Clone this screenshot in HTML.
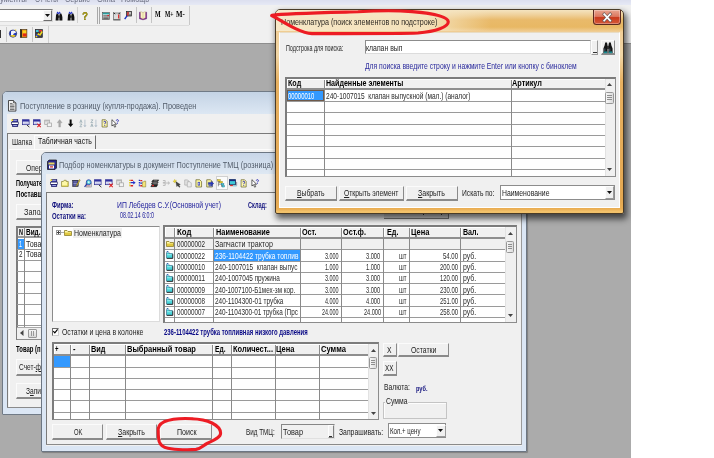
<!DOCTYPE html>
<html>
<head>
<meta charset="utf-8">
<title>1C</title>
<style>
html,body{margin:0;padding:0;background:#fff;}
body{width:714px;height:458px;overflow:hidden;position:relative;font-family:"Liberation Sans",sans-serif;}
#app{position:absolute;left:0;top:0;width:631px;height:458px;background:#ababab;overflow:hidden;}
#fx{position:absolute;left:0;top:0;width:631px;height:458px;filter:blur(.45px);}
.a{position:absolute;box-sizing:border-box;}
.t{position:absolute;white-space:pre;line-height:1;transform-origin:0 0;font-family:"Liberation Sans",sans-serif;}
.btn{background:#f0f0f0;border-top:1px solid #fbfbfb;border-left:1px solid #fbfbfb;border-right:1px solid #8a8a8a;border-bottom:2px solid #8a8a8a;}
.sunk{background:#fff;border:1px solid #8c8c8c;border-right-color:#dcdcdc;border-bottom-color:#dcdcdc;}
.grid{background:#fff;border:1px solid #8c8c8c;border-top:2px solid #7c7c7c;border-left:2px solid #7c7c7c;}
.hl{background:#9a9a9a;height:1px;}
.vl{background:#8a8a8a;width:1px;}
.hd{background:#f0f0f0;border-bottom:2px solid #9a9a9a;}
.win{background:#f0f0f0;border:1px solid #6d7f95;border-radius:4px 4px 0 0;box-shadow:0 0 0 0 #000;}
svg{position:absolute;overflow:visible;}
</style>
</head>
<body>
<div id="app"><div id="fx">
<div class="a" style="left:-3px;top:-3px;width:640px;height:8px;background:linear-gradient(#dcdfef 3px,#e6e9f5 8px);"></div>
<span class="t" style="left:0.0px;top:-6.3px;font-size:9.57px;color:#6a6e80;transform:scaleX(0.815);">ументы</span>
<span class="t" style="left:35.0px;top:-6.3px;font-size:9.57px;color:#6a6e80;transform:scaleX(0.695);">Отчеты</span>
<span class="t" style="left:65.0px;top:-6.3px;font-size:9.57px;color:#6a6e80;transform:scaleX(0.763);">Сервис</span>
<span class="t" style="left:97.0px;top:-6.3px;font-size:9.57px;color:#6a6e80;transform:scaleX(0.809);">Окна</span>
<span class="t" style="left:121.0px;top:-6.3px;font-size:9.57px;color:#6a6e80;transform:scaleX(0.758);">Помощь</span>
<div class="a" style="left:-3px;top:4.6px;width:640px;height:39.6px;background:#f0f0f0;border-bottom:1.500px solid #8e8e8e;"></div>
<div class="a" style="left:-2px;top:9px;width:54.5px;height:12.5px;background:#fff;border:1px solid #7e7e7e;border-bottom-color:#d8d8d8;border-right-color:#d8d8d8;"></div>
<div class="a" style="left:42.7px;top:10px;width:9.3px;height:10.8px;background:#f0f0f0;border:1px solid #fdfdfd;border-right-color:#6e6e6e;border-bottom-color:#6e6e6e;"></div>
<svg style="left:45px;top:14px" width="5" height="3"><path d="M0 0h5l-2.500 3z" fill="#111"/></svg>
<svg style="left:54.6px;top:10.5px" width="7.4" height="10" viewBox="0 0 7.400 10"><path d="M1 4.200l.7-1.600h1.500l.4 1.600v5.300h-3zM4.400 4.200l.4-1.600h1.500l.7 1.600 .4 2v3.300h-3z" fill="#111"/><rect x="3.200" y="4.600" width="1.400" height="2.200" fill="#111"/><path d="M1.400 2.600l1-2.200 1.200 1.300 1.200-1.300 1 2.200-1.200-.2-1 .9-1-.9z" fill="#2434c8"/></svg>
<svg style="left:66.8px;top:10.5px" width="7.4" height="10" viewBox="0 0 7.400 10"><path d="M1 4.200l.7-1.600h1.500l.4 1.600v5.300h-3zM4.400 4.200l.4-1.600h1.500l.7 1.600 .4 2v3.300h-3z" fill="#111"/><rect x="3.200" y="4.600" width="1.400" height="2.200" fill="#111"/><path d="M1.400 2.600l1-2.200 1.200 1.300 1.200-1.300 1 2.200-1.200-.2-1 .9-1-.9z" fill="#2434c8"/></svg>
<span class="t" style="left:82.4px;top:10.1px;font-size:11.74px;font-weight:bold;color:#a89c14;transform:scaleX(0.837);text-shadow:0 0 .6px #433c00;">?</span>
<div class="a" style="left:77px;top:7px;width:1px;height:16px;background:#d0d0d0;"></div>
<div class="a" style="left:96.5px;top:6.5px;width:1px;height:17.5px;background:#a8a8a8;"></div>
<div class="a" style="left:98.5px;top:6.5px;width:1px;height:17.5px;background:#a8a8a8;"></div>
<svg style="left:101.8px;top:11.8px" width="8" height="8" viewBox="0 0 8 8"><rect x=".4" y=".4" width="7.200" height="7.200" fill="#f4f4f4" stroke="#555" stroke-width=".7"/><rect x=".8" y=".8" width="6.400" height="1.600" fill="#28a0a0"/><path d="M1.200 3.800h5.600M1.200 5.200h5.600M1.200 6.600h5.600" stroke="#333" stroke-width=".8"/><rect x="5.400" y="2.900" width="1.600" height="1.300" fill="#d22"/></svg>
<svg style="left:113px;top:11.5px" width="8" height="8.5" viewBox="0 0 8 8.500"><rect x=".6" y="1" width="6.400" height="6.600" fill="#dcdcdc" stroke="#666" stroke-width=".7"/><path d="M.6 .6l1.500 1.600M7 .6l-1.500 1.600" stroke="#222" stroke-width="1"/><rect x="5" y="2.500" width="1.200" height="4" fill="#e03030"/><path d="M.3 8h7.200" stroke="#444" stroke-width=".8"/></svg>
<svg style="left:124.2px;top:11.2px" width="8" height="9" viewBox="0 0 8 9"><rect x="2.500" y=".5" width="5" height="4.500" fill="#888" stroke="#222" stroke-width=".7"/><rect x="3.200" y="1.200" width="1.600" height="1.600" fill="#d22"/><rect x="5.200" y="1.200" width="1.600" height="1.600" fill="#ddd"/><path d="M3.500 4.200l-2.800 4" stroke="#1830c0" stroke-width="1.400"/><path d="M4.200 3.200l-1 1.500" stroke="#d22" stroke-width="1.200"/></svg>
<div class="a" style="left:135.5px;top:7px;width:1px;height:16px;background:#c4c4c4;"></div>
<svg style="left:139.2px;top:11px" width="8.2" height="9.2" viewBox="0 0 8.200 9.200"><path d="M.5 1.200l3.500 1 3.600-1v6.600l-3.600 1-3.500-1z" fill="#8a2a9c" stroke="#4a0a5c" stroke-width=".5"/><path d="M1.600 .4l2.400 1.200 2.400-1.200v6.400l-2.400 1.200-2.400-1.200z" fill="#fbf6c8" stroke="#a08a50" stroke-width=".3"/><path d="M4 1.600v6.400" stroke="#b8a860" stroke-width=".5"/></svg>
<div class="a" style="left:150.5px;top:7px;width:1px;height:16px;background:#c4c4c4;"></div>
<span class="t" style="left:155.3px;top:11.3px;font-size:8.27px;font-weight:bold;color:#000;transform:scaleX(0.726);font-family:'Liberation Serif',serif;">M</span>
<span class="t" style="left:164.8px;top:11.3px;font-size:8.27px;font-weight:bold;color:#000;transform:scaleX(0.683);font-family:'Liberation Serif',serif;">M+</span>
<span class="t" style="left:176.0px;top:11.3px;font-size:8.27px;font-weight:bold;color:#000;transform:scaleX(0.830);font-family:'Liberation Serif',serif;">M-</span>
<div class="a" style="left:188.5px;top:6px;width:1px;height:18.5px;background:#c8c8c8;"></div>
<div class="a" style="left:0px;top:24.5px;width:189px;height:1px;background:#dedede;"></div>
<div class="a" style="left:0px;top:29.5px;width:1.2px;height:8.5px;background:#333;"></div>
<div class="a" style="left:5.5px;top:27px;width:1px;height:15px;background:#c8c8c8;"></div>
<svg style="left:8.6px;top:29.3px" width="8" height="9.2" viewBox="0 0 8 9.200"><circle cx="4" cy="4.600" r="3.700" fill="#1c34b8" stroke="#0c1450" stroke-width=".5"/><path d="M2 2.200c2-1.600 4.600-.6 5.200 1.200l-2.400 1.200-1.400 2.400-1.400-.6z" fill="#f4f4fc"/><path d="M1 6.500c1.500 1.800 4.200 2 5.800 .2l-1.800-1z" fill="#e8c820"/><path d="M5.600 .6l1.800 .2-.6 1.600z" fill="#e8c820"/></svg>
<svg style="left:20.2px;top:29.3px" width="7.2" height="9" viewBox="0 0 7.200 9"><rect x=".3" y=".5" width="6.600" height="8" fill="#e88c10" stroke="#3a2a10" stroke-width=".6"/><rect x=".3" y=".5" width="1.600" height="8" fill="#222"/><rect x="2.600" y="1.500" width="3.600" height="3" fill="#f8d020"/><rect x="3" y="4.500" width="3.400" height="2.800" fill="#e02818"/></svg>
<div class="a" style="left:32px;top:27px;width:1px;height:15px;background:#c8c8c8;"></div>
<svg style="left:35px;top:29.3px" width="7.8" height="9" viewBox="0 0 7.800 9"><rect x=".3" y=".4" width="7.200" height="8.200" fill="#3a3a44" stroke="#111" stroke-width=".5"/><rect x="1" y="1" width="2.600" height="2" fill="#40c8d8"/><rect x="4" y="1" width="3" height="1.600" fill="#e03030"/><path d="M1 8l2.500-3 1.500 1 2.200-3.500" fill="none" stroke="#f0d820" stroke-width="1.500"/><path d="M1.200 5.500l2 1.800" stroke="#2840d0" stroke-width="1.300"/></svg>
<div class="a" style="left:47.8px;top:26px;width:1px;height:17px;background:#d0d0d0;"></div>
<div class="a" style="left:2px;top:90.6px;width:505px;height:324px;background:#dbe6f4;border:1px solid #707a86;border-radius:5px 5px 1px 1px;"></div>
<div class="a" style="left:3px;top:92px;width:503px;height:21.7px;background:linear-gradient(#c4d3e5,#dce7f3);border-radius:4px 4px 0 0;"></div>
<div class="a" style="left:7px;top:113.5px;width:495px;height:294.5px;background:#f0f0f0;"></div>
<svg style="left:8.200px;top:99.600px" width="8.400" height="11.600" viewBox="0 0 8.400 11.600"><path d="M.5 .5h5l2.400 2.400v8.200h-7.400z" fill="#f2f2f2" stroke="#3a3a3a" stroke-width=".9"/><path d="M5.500 .5v2.400h2.400" fill="#bbb" stroke="#3a3a3a" stroke-width=".7"/><path d="M2 3.500h2.500M2 5h4.500M2 6.500h4.500M2 8h4.500M2 9.500h4.500" stroke="#555" stroke-width=".8"/></svg>
<span class="t" style="left:19.6px;top:101.9px;font-size:9.31px;color:#525c6a;transform:scaleX(0.792);">Поступление в розницу (купля-продажа). Проведен</span>
<svg style="left:11px;top:119.3px" width="8.2" height="8.6" viewBox="0 0 9 9"><rect x="1.500" y=".5" width="6" height="3" fill="#2a2a98" stroke="#15155a" stroke-width=".6"/><rect x=".5" y="3.200" width="7.500" height="2.600" fill="#fff" stroke="#15155a" stroke-width=".7"/><rect x="1.500" y="5.800" width="6" height="2.400" fill="#2a2a98" stroke="#15155a" stroke-width=".6"/><rect x="2.500" y="1.300" width="4" height=".8" fill="#cfd4ff"/><rect x="2.500" y="6.600" width="4" height=".8" fill="#cfd4ff"/><rect x=".3" y=".2" width="2" height="1.800" fill="#f2e23a"/></svg>
<svg style="left:21.7px;top:119.3px" width="8.2" height="8.6" viewBox="0 0 9 9"><rect x=".6" y=".6" width="7.200" height="5.400" fill="#eceefa" stroke="#2a2a90" stroke-width=".8"/><rect x=".6" y=".6" width="7.200" height="2" fill="#3030a0"/><path d="M1.500 4.300h5.400" stroke="#8a8ad0" stroke-width=".7"/><path d="M5.500 6.500l2.600 2.200" stroke="#222" stroke-width="1"/></svg>
<svg style="left:32.7px;top:119.3px" width="8.2" height="8.6" viewBox="0 0 9 9"><rect x=".6" y=".6" width="7.200" height="5.400" fill="#eceefa" stroke="#2a2a90" stroke-width=".8"/><rect x=".6" y=".6" width="7.200" height="2" fill="#3030a0"/><path d="M1.500 4.300h3.400" stroke="#8a8ad0" stroke-width=".7"/><path d="M4.800 4.800l3.700 4M8.500 4.800l-3.700 4" stroke="#e02020" stroke-width="1.100"/></svg>
<svg style="left:44px;top:119.3px" width="8.2" height="8.6" viewBox="0 0 9 9"><rect x=".8" y="1" width="5.400" height="4.800" fill="#e6e6e6" stroke="#a2a2a2" stroke-width=".8"/><rect x=".8" y="1" width="5.400" height="1.400" fill="#b8b8b8"/><rect x="3.600" y="4.200" width="4.600" height="4" fill="#f2f2f2" stroke="#a2a2a2" stroke-width=".8"/></svg>
<svg style="left:55.5px;top:119.3px" width="8.2" height="8.6" viewBox="0 0 9 9"><path d="M4 .3l2.800 3.700h-1.800v4.700h-2v-4.700h-1.800z" fill="#a8a8a8" stroke="#929292" stroke-width=".3"/></svg>
<svg style="left:67px;top:119.3px" width="8.2" height="8.6" viewBox="0 0 9 9"><path d="M4 8.700l3-3.700h-1.900v-4.700h-2.200v4.700h-1.900z" fill="#0a0a0a"/></svg>
<svg style="left:79px;top:119.3px" width="8.2" height="8.6" viewBox="0 0 9 9"><path d="M6.500 .5v7.500M5.300 6.500l1.200 1.800 1.200-1.800" fill="none" stroke="#9ab" stroke-width=".7"/><path d="M.8 4l1.300-3.400 1.300 3.400M1.300 2.900h1.600" fill="none" stroke="#8aa0a8" stroke-width=".7"/><path d="M.9 5.300h2.400l-2.400 3h2.500" fill="none" stroke="#8aa0a8" stroke-width=".7"/></svg>
<svg style="left:89.8px;top:119.3px" width="8.2" height="8.6" viewBox="0 0 9 9"><path d="M6.500 .5v7.500M5.300 6.500l1.200 1.800 1.200-1.800" fill="none" stroke="#9ab" stroke-width=".7"/><path d="M.8 8.500l1.300-3.400 1.300 3.400M1.300 7.400h1.600" fill="none" stroke="#8aa0a8" stroke-width=".7"/><path d="M.9 .7h2.400l-2.400 3h2.500" fill="none" stroke="#8aa0a8" stroke-width=".7"/></svg>
<svg style="left:100.5px;top:119.3px" width="8.2" height="8.6" viewBox="0 0 9 9"><path d="M1.200 .6h3.800l1.800 1.800v6.200h-5.600z" fill="#fdf8b0" stroke="#5c5618" stroke-width=".7"/><path d="M3 3.300c0-1.400 2.200-1.400 2.200 0 0 .9-1.100 .9-1.100 2.100M4.100 6.300v1" fill="none" stroke="#2828b0" stroke-width="1"/></svg>
<svg style="left:111px;top:119.3px" width="8.2" height="8.6" viewBox="0 0 9 9"><path d="M1 .5v7l1.700-1.500 1.300 2.800 1.200-.6-1.300-2.700h2.200z" fill="#fff" stroke="#111" stroke-width=".7"/><path d="M5.800 1.600c0-1.500 2.400-1.500 2.400 0 0 .9-1.200 .9-1.200 2M7 4.400v.9" fill="none" stroke="#2828b0" stroke-width="1"/></svg>
<div class="a" style="left:7px;top:133px;width:495px;height:1px;background:#7a7a7a;"></div>
<div class="a" style="left:7px;top:133px;width:1px;height:274.5px;background:#7a7a7a;"></div>
<div class="a" style="left:7px;top:407px;width:495px;height:1px;background:#8a8a8a;"></div>
<div class="a" style="left:9px;top:148.5px;width:493px;height:1px;background:#fcfcfc;"></div>
<div class="a" style="left:9px;top:148.5px;width:1px;height:258px;background:#fcfcfc;"></div>
<span class="t" style="left:11.9px;top:138.4px;font-size:8.7px;color:#222;transform:scaleX(0.766);">Шапка</span>
<div class="a" style="left:34px;top:135px;width:62px;height:14px;background:#f0f0f0;border-top:1px solid #fcfcfc;border-left:1px solid #fcfcfc;border-right:1px solid #6e6e6e;"></div>
<span class="t" style="left:38.2px;top:136.9px;font-size:8.7px;color:#111;transform:scaleX(0.796);">Табличная часть</span>
<div class="a btn" style="left:16px;top:160.3px;width:44px;height:15px;"></div>
<span class="t" style="left:25.7px;top:163.5px;font-size:8.7px;color:#222;transform:scaleX(0.779);">Операция</span>
<span class="t" style="left:15.5px;top:180.4px;font-size:8.27px;font-weight:bold;color:#000;transform:scaleX(0.675);">Получатель</span>
<span class="t" style="left:15.5px;top:190.5px;font-size:8.27px;font-weight:bold;color:#000;transform:scaleX(0.738);">Поставщик</span>
<div class="a btn" style="left:16px;top:204px;width:44px;height:15.5px;"></div>
<span class="t" style="left:24.4px;top:207.5px;font-size:8.7px;color:#222;transform:scaleX(0.843);">Заполнить</span>
<div class="a grid" style="left:16px;top:226px;width:40px;height:114px;"></div>
<div class="a hd" style="left:18px;top:228px;width:38px;height:10px;"></div>
<span class="t" style="left:18.5px;top:228.4px;font-size:8.7px;font-weight:bold;color:#000;transform:scaleX(0.637);">N</span>
<span class="t" style="left:26.0px;top:228.4px;font-size:8.7px;font-weight:bold;color:#000;transform:scaleX(0.741);">Вид.</span>
<div class="a" style="left:18px;top:238.5px;width:6px;height:10.5px;background:#3399ff;"></div>
<span class="t" style="left:18.5px;top:239.6px;font-size:8.7px;color:#fff;transform:scaleX(0.620);">1</span>
<span class="t" style="left:18.5px;top:250.4px;font-size:8.7px;color:#222;transform:scaleX(0.723);">2</span>
<span class="t" style="left:26.0px;top:239.6px;font-size:8.7px;color:#222;transform:scaleX(0.823);">Това</span>
<span class="t" style="left:26.0px;top:250.4px;font-size:8.7px;color:#222;transform:scaleX(0.823);">Това</span>
<div class="a hl" style="left:17px;top:249px;width:38px;height:1px;"></div>
<div class="a hl" style="left:17px;top:259.9px;width:38px;height:1px;"></div>
<div class="a hl" style="left:17px;top:270.8px;width:38px;height:1px;"></div>
<div class="a hl" style="left:17px;top:281.7px;width:38px;height:1px;"></div>
<div class="a hl" style="left:17px;top:292.6px;width:38px;height:1px;"></div>
<div class="a hl" style="left:17px;top:303.5px;width:38px;height:1px;"></div>
<div class="a hl" style="left:17px;top:314.4px;width:38px;height:1px;"></div>
<div class="a hl" style="left:17px;top:325.3px;width:38px;height:1px;"></div>
<div class="a vl" style="left:24px;top:227px;width:1px;height:101px;"></div>
<div class="a" style="left:17px;top:327px;width:38px;height:12px;background:#f0f0f0;border-top:1px solid #aaa;"></div>
<svg style="left:20px;top:330px" width="4" height="6"><path d="M3.500 0v6l-3.500-3z" fill="#444"/></svg>
<div class="a" style="left:27.5px;top:328.5px;width:9px;height:9.5px;background:linear-gradient(#f4f4f4,#d8d8d8);border:1px solid #989898;border-radius:1px;"></div>
<div class="a" style="left:30.5px;top:331px;width:1px;height:5px;background:#999;"></div>
<div class="a" style="left:32.5px;top:331px;width:1px;height:5px;background:#999;"></div>
<span class="t" style="left:16.0px;top:345.9px;font-size:8.27px;font-weight:bold;color:#000;transform:scaleX(0.721);">Товар (приход</span>
<div class="a btn" style="left:16px;top:359px;width:44px;height:16.5px;"></div>
<span class="t" style="left:18.5px;top:363.0px;font-size:8.7px;color:#222;transform:scaleX(0.751);">Счет-<u>ф</u></span>
<div class="a btn" style="left:16px;top:383px;width:44px;height:15.5px;"></div>
<span class="t" style="left:26.0px;top:386.5px;font-size:8.7px;color:#222;transform:scaleX(0.763);">З<u>а</u>пи</span>
<div class="a" style="left:41px;top:151.5px;width:485.5px;height:300px;background:#dbe6f4;border:1px solid #6c7683;border-radius:5px 5px 1px 1px;box-shadow:1px 1px 1px rgba(0,0,0,.25);"></div>
<div class="a" style="left:42px;top:152.5px;width:483.5px;height:21.5px;background:linear-gradient(#c8d6e8,#dee8f3);border-radius:4px 4px 0 0;"></div>
<div class="a" style="left:46px;top:173.5px;width:476px;height:272px;background:#f0f0f0;"></div>
<div class="a" style="left:46px;top:192px;width:476px;height:1px;background:#7a7a7a;"></div>
<div class="a" style="left:46px;top:192px;width:1px;height:253px;background:#7a7a7a;"></div>
<div class="a" style="left:46px;top:444.3px;width:476px;height:1px;background:#8a8a8a;"></div>
<div class="a" style="left:521px;top:192px;width:1px;height:253px;background:#9a9a9a;"></div>
<svg style="left:46.5px;top:159px" width="10" height="11" viewBox="0 0 10 11"><path d="M2 1h7.500v8l-1.500 1.500h-7.500v-8z" fill="#28288a" stroke="#111" stroke-width=".7"/><rect x="1.500" y="3.500" width="6" height="2" fill="#e8d860"/><rect x="2" y="6.500" width="5" height="3" fill="#fff"/><rect x="3" y="7.300" width="3" height="1.200" fill="#c22"/></svg>
<span class="t" style="left:58.5px;top:160.9px;font-size:9.31px;color:#525c6a;transform:scaleX(0.781);">Подбор номенклатуры в документ Поступление ТМЦ (розница)</span>
<div class="a" style="left:216px;top:176px;width:11.5px;height:13.5px;background:#fbfbfb;border:1px solid #d0d0d0;"></div>
<svg style="left:49.5px;top:178.5px" width="8.2" height="8.6" viewBox="0 0 9 9"><rect x="1.500" y=".5" width="6" height="3" fill="#2a2a98" stroke="#15155a" stroke-width=".6"/><rect x=".5" y="3.200" width="7.500" height="2.600" fill="#fff" stroke="#15155a" stroke-width=".7"/><rect x="1.500" y="5.800" width="6" height="2.400" fill="#2a2a98" stroke="#15155a" stroke-width=".6"/><rect x="2.500" y="1.300" width="4" height=".8" fill="#cfd4ff"/><rect x="2.500" y="6.600" width="4" height=".8" fill="#cfd4ff"/><rect x=".3" y=".2" width="2" height="1.800" fill="#f2e23a"/></svg>
<svg style="left:61px;top:178.5px" width="8.2" height="8.6" viewBox="0 0 9 9"><path d="M.6 2.500h2l.8-1.300h2.300v1.300h2.300v5.500h-7.400z" fill="#fdf8a8" stroke="#7c7420" stroke-width=".7"/><path d="M1.200 7.400h6.200v-3.800" fill="none" stroke="#d8c840" stroke-width=".9"/></svg>
<svg style="left:72px;top:178.5px" width="8.2" height="8.6" viewBox="0 0 9 9"><rect x=".8" y="1.200" width="6" height="6.800" fill="#2a2a78" stroke="#111" stroke-width=".5"/><path d="M1.500 3h4.500M1.500 4.700h4.500M1.500 6.400h4.500" stroke="#c8ccf0" stroke-width=".7"/><path d="M8.200 .3l-3.300 6 -.3 1.600 1.300-1 3.200-6z" fill="#e8d23a" stroke="#5a4a10" stroke-width=".4"/></svg>
<svg style="left:83.8px;top:178.5px" width="8.2" height="8.6" viewBox="0 0 9 9"><rect x="2.200" y="5" width="5.800" height="3.600" fill="#d8d8e4" stroke="#666" stroke-width=".5"/><circle cx="5.200" cy="3.300" r="2.700" fill="#58d0d8" stroke="#2838a8" stroke-width=".9"/><circle cx="5.200" cy="3.300" r="1" fill="#d8f8f8"/><path d="M3.200 5.300l-2.600 3.200" stroke="#2838a8" stroke-width="1.300"/><path d="M3 7.300h4" stroke="#c04040" stroke-width=".6"/></svg>
<svg style="left:94.2px;top:178.5px" width="8.2" height="8.6" viewBox="0 0 9 9"><rect x=".6" y=".6" width="7.200" height="5.400" fill="#eceefa" stroke="#2a2a90" stroke-width=".8"/><rect x=".6" y=".6" width="7.200" height="2" fill="#3030a0"/><path d="M1.500 4.300h5.400" stroke="#8a8ad0" stroke-width=".7"/><path d="M5.500 6.500l2.600 2.200" stroke="#222" stroke-width="1"/></svg>
<svg style="left:105px;top:178.5px" width="8.2" height="8.6" viewBox="0 0 9 9"><rect x=".6" y=".6" width="7.200" height="5.400" fill="#eceefa" stroke="#2a2a90" stroke-width=".8"/><rect x=".6" y=".6" width="7.200" height="2" fill="#3030a0"/><path d="M1.500 4.300h3.400" stroke="#8a8ad0" stroke-width=".7"/><path d="M4.800 4.800l3.700 4M8.500 4.800l-3.700 4" stroke="#e02020" stroke-width="1.100"/></svg>
<svg style="left:116.3px;top:178.5px" width="8.2" height="8.6" viewBox="0 0 9 9"><rect x=".8" y=".8" width="5.400" height="4.800" fill="#e6e6e6" stroke="#a2a2a2" stroke-width=".8"/><rect x=".8" y=".8" width="5.400" height="1.400" fill="#b8b8b8"/><rect x="3.600" y="4" width="4.600" height="4.200" fill="#f2f2f2" stroke="#a2a2a2" stroke-width=".8"/></svg>
<svg style="left:127.7px;top:178.5px" width="8.2" height="8.6" viewBox="0 0 9 9"><path d="M2 .5v8" stroke="#e0c820" stroke-width="1.600" stroke-dasharray="1.600 1"/><path d="M2.800 3.200h3v-1.400l2.600 2-2.600 2v-1.400h-3z" fill="#2030c8"/><path d="M2.800 6.400h2.800v1.600h-2.800z" fill="#d82020"/><path d="M2.800 .6h2.800v1.400h-2.800z" fill="#d82020"/></svg>
<svg style="left:138.3px;top:178.5px" width="8.2" height="8.6" viewBox="0 0 9 9"><path d="M1.600 .5v8" stroke="#2030c8" stroke-width="1.500" stroke-dasharray="1.600 1"/><path d="M2.500 .8h2.200v1.500h-2.200zM2.500 6.500h2.200v1.500h-2.200z" fill="#d82020"/><path d="M2.500 3.600h2.200v1.400h-2.200z" fill="#2030c8"/><path d="M4.800 3h1.400l.6-.9h1.700v6.400h-3.700z" fill="#f4e478" stroke="#6c6420" stroke-width=".5"/></svg>
<svg style="left:150.5px;top:178.5px" width="8.2" height="8.6" viewBox="0 0 9 9"><path d="M2.200 .8h6.300l-1.400 2h-6.300z" fill="#333" stroke="#000" stroke-width=".5"/><path d="M1.700 3.300h6.300l-1.400 2h-6.300z" fill="#555" stroke="#000" stroke-width=".5"/><path d="M1.200 5.800h6.300l-1.400 2.400h-6.300z" fill="#222" stroke="#000" stroke-width=".5"/><rect x="1.200" y="6.300" width="2" height="1.400" fill="#e02020"/><path d="M3 1.800h4M2.500 4.300h4" stroke="#ddd" stroke-width=".5"/></svg>
<svg style="left:161.5px;top:178.5px" width="8.2" height="8.6" viewBox="0 0 9 9"><path d="M1 1.500h2.500v2.500h-2.500M1 4h2.500v2.800h-2.500M4.500 4.200h3.500M6.500 2.600l1.800 1.600-1.800 1.600" fill="none" stroke="#b4b4b4" stroke-width="1"/></svg>
<svg style="left:173px;top:178.5px" width="8.2" height="8.6" viewBox="0 0 9 9"><path d="M1.800 0l.6 1.400 1.500-.3-1 1.100 .9 1.300-1.500-.4-.9 1.200-.1-1.500-1.400-.6 1.400-.5z" fill="#f4e030" stroke="#b09810" stroke-width=".3"/><path d="M3.200 2.800l4.800 3-1.700.5 1.400 2-.9.600-1.400-2-1.200 1.200z" fill="#444" stroke="#111" stroke-width=".4"/></svg>
<svg style="left:184px;top:178.5px" width="8.2" height="8.6" viewBox="0 0 9 9"><path d="M.8 .8h3.200l1.200 1.200v4.500h-4.400z" fill="#e4e4e4" stroke="#a4a4a4" stroke-width=".7"/><path d="M3.600 2.800h3l1.400 1.400v4.300h-4.400z" fill="#ececec" stroke="#a4a4a4" stroke-width=".7"/></svg>
<svg style="left:195px;top:178.5px" width="8.2" height="8.6" viewBox="0 0 9 9"><path d="M1 .6h4.200l2 2v6h-6.200z" fill="#fbf6a0" stroke="#5c5618" stroke-width=".7"/><rect x="3" y="3" width="2.400" height="4" fill="#3038b0"/><rect x="3.700" y="3.800" width="1" height="2.200" fill="#e8e8ff"/></svg>
<svg style="left:206px;top:178.5px" width="8.2" height="8.6" viewBox="0 0 9 9"><path d="M.8 .6h4.200l2 2v6h-6.200z" fill="#fbf6a0" stroke="#5c5618" stroke-width=".7"/><path d="M2.500 3.500h3.200v-1.300l2.800 2.500-2.800 2.500v-1.300h-3.200z" fill="#2838c0" stroke="#101868" stroke-width=".4"/><rect x="2.800" y="6.700" width="4.600" height="1.200" fill="#2838c0"/></svg>
<svg style="left:217.3px;top:178.5px" width="8.2" height="8.6" viewBox="0 0 9 9"><path d="M1.500 .8v7M1.500 3h2M1.500 5.500h3.500M5 5.500v2.500h1.500" fill="none" stroke="#444" stroke-width=".6"/><rect x=".6" y=".4" width="3" height="1.700" fill="#f0d820" stroke="#7a6a10" stroke-width=".4"/><rect x="3" y="2.400" width="3" height="1.700" fill="#f0d820" stroke="#7a6a10" stroke-width=".4"/><rect x="4.600" y="4.700" width="3" height="1.700" fill="#48d0d8" stroke="#18607a" stroke-width=".4"/><rect x="5.600" y="7" width="2.800" height="1.600" fill="#48d0d8" stroke="#18607a" stroke-width=".4"/></svg>
<svg style="left:228.5px;top:178.5px" width="8.2" height="8.6" viewBox="0 0 9 9"><rect x=".6" y=".5" width="6.600" height="5.600" fill="#40c8d8" stroke="#1a2a5a" stroke-width=".9"/><rect x=".6" y=".5" width="6.600" height="1.600" fill="#1a2a7a"/><path d="M2 7h6.400v-4" fill="none" stroke="#889" stroke-width="1"/><rect x="1.200" y="6.300" width="3" height="1.300" fill="#d83030"/><rect x="4.400" y="6.800" width="4" height="1.500" fill="#a8e0e8"/></svg>
<svg style="left:239.5px;top:178.5px" width="8.2" height="8.6" viewBox="0 0 9 9"><path d="M1.200 .6h3.800l1.800 1.800v6.200h-5.600z" fill="#fdf8b0" stroke="#5c5618" stroke-width=".7"/><path d="M3 3.300c0-1.400 2.200-1.400 2.200 0 0 .9-1.100 .9-1.100 2.100M4.100 6.300v1" fill="none" stroke="#2828b0" stroke-width="1"/></svg>
<svg style="left:251px;top:178.5px" width="8.2" height="8.6" viewBox="0 0 9 9"><path d="M1 .5v7l1.700-1.500 1.300 2.800 1.200-.6-1.300-2.700h2.200z" fill="#fff" stroke="#111" stroke-width=".7"/><path d="M5.800 1.600c0-1.500 2.400-1.500 2.400 0 0 .9-1.200 .9-1.200 2M7 4.400v.9" fill="none" stroke="#2828b0" stroke-width="1"/></svg>
<span class="t" style="left:52.0px;top:200.8px;font-size:8.7px;font-weight:bold;color:#0e0e7c;transform:scaleX(0.671);">Фирма:</span>
<span class="t" style="left:52.0px;top:211.5px;font-size:8.7px;font-weight:bold;color:#0e0e7c;transform:scaleX(0.679);">Остатки на:</span>
<span class="t" style="left:117.0px;top:200.6px;font-size:9.13px;color:#1c1c9a;transform:scaleX(0.746);">ИП Лебедев С.У.(Основной учет)</span>
<span class="t" style="left:120.0px;top:211.7px;font-size:8.27px;color:#1c1c9a;transform:scaleX(0.643);">08.02.14 6:0:0</span>
<span class="t" style="left:247.7px;top:200.5px;font-size:8.7px;font-weight:bold;color:#0e0e7c;transform:scaleX(0.643);">Склад:</span>
<div class="a sunk" style="left:52px;top:226px;width:107.5px;height:96.3px;"></div>
<div class="a" style="left:56px;top:230px;width:5px;height:5px;background:#fff;border:1px solid #9a9a9a;"></div>
<div class="a" style="left:57px;top:232px;width:3px;height:1px;background:#444;"></div>
<div class="a" style="left:58px;top:231px;width:1px;height:3px;background:#444;"></div>
<div class="a" style="left:61px;top:232px;width:3px;height:1px;background:#aaa;"></div>
<svg style="left:64px;top:229px" width="8" height="7" viewBox="0 0 8 7"><path d="M.5 1.500h2.500l1 1h3.500v4h-7z" fill="#fff9a8" stroke="#8a7a20" stroke-width=".8"/><rect x="1" y="3.500" width="6" height="2.500" fill="#e0c840"/></svg>
<div class="a" style="left:73px;top:227.5px;width:49px;height:10.5px;background:#f0f0f0;"></div>
<span class="t" style="left:74.0px;top:228.8px;font-size:8.7px;color:#222;transform:scaleX(0.805);">Номенклатура</span>
<div class="a grid" style="left:163px;top:225.3px;width:353.5px;height:97.5px;"></div>
<div class="a" style="left:165px;top:227.3px;width:340px;height:10.2px;background:#f0f0f0;"></div>
<div class="a" style="left:165px;top:238px;width:340px;height:11.2px;background:#f0f0f0;"></div>
<div class="a" style="left:505px;top:227.3px;width:10.5px;height:94.5px;background:#f0f0f0;border-left:1px solid #e2e2e2;"></div>
<div class="a" style="left:214.2px;top:250.2px;width:85.8px;height:10.4px;background:#3399ff;"></div>
<div class="a hl" style="left:165px;top:237.2px;width:340px;height:1px;"></div>
<div class="a hl" style="left:165px;top:249.2px;width:340px;height:1px;"></div>
<div class="a hl" style="left:165px;top:260.6px;width:340px;height:1px;"></div>
<div class="a hl" style="left:165px;top:271.8px;width:340px;height:1px;"></div>
<div class="a hl" style="left:165px;top:283.1px;width:340px;height:1px;"></div>
<div class="a hl" style="left:165px;top:294.4px;width:340px;height:1px;"></div>
<div class="a hl" style="left:165px;top:305.8px;width:340px;height:1px;"></div>
<div class="a hl" style="left:165px;top:317px;width:340px;height:1px;"></div>
<div class="a" style="left:165px;top:236.5px;width:340px;height:2px;background:#8e8e8e;"></div>
<div class="a vl" style="left:174.3px;top:227.3px;width:1px;height:94.5px;"></div>
<div class="a vl" style="left:213.2px;top:227.3px;width:1px;height:94.5px;"></div>
<div class="a vl" style="left:300px;top:227.3px;width:1px;height:94.5px;"></div>
<div class="a vl" style="left:341.2px;top:227.3px;width:1px;height:94.5px;"></div>
<div class="a vl" style="left:383.2px;top:227.3px;width:1px;height:94.5px;"></div>
<div class="a vl" style="left:409.3px;top:227.3px;width:1px;height:94.5px;"></div>
<div class="a vl" style="left:460.3px;top:227.3px;width:1px;height:94.5px;"></div>
<div class="a" style="left:165px;top:227.3px;width:340px;height:1px;background:#fff;"></div>
<div class="a" style="left:165px;top:227.3px;width:1px;height:9.2px;background:#fff;"></div>
<div class="a" style="left:175.3px;top:227.3px;width:1px;height:9.2px;background:#fff;"></div>
<div class="a" style="left:214.2px;top:227.3px;width:1px;height:9.2px;background:#fff;"></div>
<div class="a" style="left:301px;top:227.3px;width:1px;height:9.2px;background:#fff;"></div>
<div class="a" style="left:342.2px;top:227.3px;width:1px;height:9.2px;background:#fff;"></div>
<div class="a" style="left:384.2px;top:227.3px;width:1px;height:9.2px;background:#fff;"></div>
<div class="a" style="left:410.3px;top:227.3px;width:1px;height:9.2px;background:#fff;"></div>
<div class="a" style="left:461.3px;top:227.3px;width:1px;height:9.2px;background:#fff;"></div>
<span class="t" style="left:176.7px;top:228.0px;font-size:8.7px;font-weight:bold;color:#000;transform:scaleX(0.904);">Код</span>
<span class="t" style="left:215.5px;top:228.0px;font-size:8.7px;font-weight:bold;color:#000;transform:scaleX(0.846);">Наименование</span>
<span class="t" style="left:302.3px;top:228.0px;font-size:8.7px;font-weight:bold;color:#000;transform:scaleX(0.828);">Ост.</span>
<span class="t" style="left:343.4px;top:228.0px;font-size:8.7px;font-weight:bold;color:#000;transform:scaleX(0.835);">Ост.ф.</span>
<span class="t" style="left:387.4px;top:228.0px;font-size:8.7px;font-weight:bold;color:#000;transform:scaleX(0.837);">Ед.</span>
<span class="t" style="left:411.2px;top:228.0px;font-size:8.7px;font-weight:bold;color:#000;transform:scaleX(0.865);">Цена</span>
<span class="t" style="left:462.5px;top:228.0px;font-size:8.7px;font-weight:bold;color:#000;transform:scaleX(0.813);">Вал.</span>
<svg style="left:166px;top:240.2px" width="8" height="7" viewBox="0 0 8 7"><path d="M.5 1.500h2.500l1 1h3.500v4h-7z" fill="#fff9a8" stroke="#8a7a20" stroke-width=".8"/><rect x="1" y="3.500" width="6" height="2.500" fill="#e0c840"/></svg>
<span class="t" style="left:176.7px;top:239.9px;font-size:8.7px;color:#2a2a2a;transform:scaleX(0.723);">00000002</span>
<span class="t" style="left:214.8px;top:239.9px;font-size:8.7px;color:#2a2a2a;transform:scaleX(0.818);">Запчасти трактор</span>
<svg style="left:166.3px;top:251.4px" width="7.200" height="8" viewBox="0 0 7.200 8"><path d="M.5 1.600h2.600v1h3.500v4.600h-6.100z" fill="#48d6da" stroke="#2a5a7a" stroke-width=".6"/><path d="M.9 7.400h5.900v-4.200" stroke="#2a2a2a" stroke-width=".9" fill="none"/><rect x=".9" y=".5" width="1.800" height="1.300" fill="#dff4ff" stroke="#36a" stroke-width=".3"/><rect x="1.200" y="3.300" width="4.400" height=".9" fill="#a8f0f0"/></svg>
<span class="t" style="left:176.7px;top:251.6px;font-size:8.7px;color:#2a2a2a;transform:scaleX(0.723);">00000022</span>
<span class="t" style="left:214.8px;top:251.6px;font-size:8.7px;color:#fff;transform:scaleX(0.756);">236-1104422 трубка топлив</span>
<span class="t" style="left:324.8px;top:251.6px;font-size:8.7px;color:#2a2a2a;transform:scaleX(0.625);">3.000</span>
<span class="t" style="left:366.4px;top:251.6px;font-size:8.7px;color:#2a2a2a;transform:scaleX(0.652);">3.000</span>
<span class="t" style="left:398.8px;top:251.6px;font-size:8.7px;color:#2a2a2a;transform:scaleX(0.684);">шт</span>
<span class="t" style="left:443.3px;top:251.6px;font-size:8.7px;color:#2a2a2a;transform:scaleX(0.689);">54.00</span>
<span class="t" style="left:462.5px;top:251.6px;font-size:8.7px;color:#2a2a2a;transform:scaleX(0.796);">руб.</span>
<svg style="left:166.3px;top:262.7px" width="7.200" height="8" viewBox="0 0 7.200 8"><path d="M.5 1.600h2.600v1h3.500v4.600h-6.100z" fill="#48d6da" stroke="#2a5a7a" stroke-width=".6"/><path d="M.9 7.400h5.900v-4.200" stroke="#2a2a2a" stroke-width=".9" fill="none"/><rect x=".9" y=".5" width="1.800" height="1.300" fill="#dff4ff" stroke="#36a" stroke-width=".3"/><rect x="1.200" y="3.300" width="4.400" height=".9" fill="#a8f0f0"/></svg>
<span class="t" style="left:176.7px;top:262.9px;font-size:8.7px;color:#2a2a2a;transform:scaleX(0.723);">00000010</span>
<span class="t" style="left:214.8px;top:262.9px;font-size:8.7px;color:#2a2a2a;transform:scaleX(0.744);">240-1007015  клапан выпус</span>
<span class="t" style="left:324.8px;top:262.9px;font-size:8.7px;color:#2a2a2a;transform:scaleX(0.625);">1.000</span>
<span class="t" style="left:366.4px;top:262.9px;font-size:8.7px;color:#2a2a2a;transform:scaleX(0.652);">1.000</span>
<span class="t" style="left:398.8px;top:262.9px;font-size:8.7px;color:#2a2a2a;transform:scaleX(0.684);">шт</span>
<span class="t" style="left:440.3px;top:262.9px;font-size:8.7px;color:#2a2a2a;transform:scaleX(0.676);">200.00</span>
<span class="t" style="left:462.5px;top:262.9px;font-size:8.7px;color:#2a2a2a;transform:scaleX(0.796);">руб.</span>
<svg style="left:166.3px;top:273.95px" width="7.200" height="8" viewBox="0 0 7.200 8"><path d="M.5 1.600h2.600v1h3.500v4.600h-6.100z" fill="#48d6da" stroke="#2a5a7a" stroke-width=".6"/><path d="M.9 7.400h5.900v-4.200" stroke="#2a2a2a" stroke-width=".9" fill="none"/><rect x=".9" y=".5" width="1.800" height="1.300" fill="#dff4ff" stroke="#36a" stroke-width=".3"/><rect x="1.200" y="3.300" width="4.400" height=".9" fill="#a8f0f0"/></svg>
<span class="t" style="left:176.7px;top:274.2px;font-size:8.7px;color:#2a2a2a;transform:scaleX(0.736);">00000011</span>
<span class="t" style="left:214.8px;top:274.2px;font-size:8.7px;color:#2a2a2a;transform:scaleX(0.739);">240-1007045 пружина</span>
<span class="t" style="left:324.8px;top:274.2px;font-size:8.7px;color:#2a2a2a;transform:scaleX(0.625);">3.000</span>
<span class="t" style="left:366.4px;top:274.2px;font-size:8.7px;color:#2a2a2a;transform:scaleX(0.652);">3.000</span>
<span class="t" style="left:398.8px;top:274.2px;font-size:8.7px;color:#2a2a2a;transform:scaleX(0.684);">шт</span>
<span class="t" style="left:440.3px;top:274.2px;font-size:8.7px;color:#2a2a2a;transform:scaleX(0.676);">120.00</span>
<span class="t" style="left:462.5px;top:274.2px;font-size:8.7px;color:#2a2a2a;transform:scaleX(0.796);">руб.</span>
<svg style="left:166.3px;top:285.25px" width="7.200" height="8" viewBox="0 0 7.200 8"><path d="M.5 1.600h2.600v1h3.500v4.600h-6.100z" fill="#48d6da" stroke="#2a5a7a" stroke-width=".6"/><path d="M.9 7.400h5.900v-4.200" stroke="#2a2a2a" stroke-width=".9" fill="none"/><rect x=".9" y=".5" width="1.800" height="1.300" fill="#dff4ff" stroke="#36a" stroke-width=".3"/><rect x="1.200" y="3.300" width="4.400" height=".9" fill="#a8f0f0"/></svg>
<span class="t" style="left:176.7px;top:285.5px;font-size:8.7px;color:#2a2a2a;transform:scaleX(0.723);">00000009</span>
<span class="t" style="left:214.8px;top:285.5px;font-size:8.7px;color:#2a2a2a;transform:scaleX(0.725);">240-1007100-Б1мех-зм кор.</span>
<span class="t" style="left:324.8px;top:285.5px;font-size:8.7px;color:#2a2a2a;transform:scaleX(0.625);">3.000</span>
<span class="t" style="left:366.4px;top:285.5px;font-size:8.7px;color:#2a2a2a;transform:scaleX(0.652);">3.000</span>
<span class="t" style="left:398.8px;top:285.5px;font-size:8.7px;color:#2a2a2a;transform:scaleX(0.684);">шт</span>
<span class="t" style="left:440.3px;top:285.5px;font-size:8.7px;color:#2a2a2a;transform:scaleX(0.676);">230.00</span>
<span class="t" style="left:462.5px;top:285.5px;font-size:8.7px;color:#2a2a2a;transform:scaleX(0.796);">руб.</span>
<svg style="left:166.3px;top:296.6px" width="7.200" height="8" viewBox="0 0 7.200 8"><path d="M.5 1.600h2.600v1h3.500v4.600h-6.100z" fill="#48d6da" stroke="#2a5a7a" stroke-width=".6"/><path d="M.9 7.400h5.900v-4.200" stroke="#2a2a2a" stroke-width=".9" fill="none"/><rect x=".9" y=".5" width="1.800" height="1.300" fill="#dff4ff" stroke="#36a" stroke-width=".3"/><rect x="1.200" y="3.300" width="4.400" height=".9" fill="#a8f0f0"/></svg>
<span class="t" style="left:176.7px;top:296.8px;font-size:8.7px;color:#2a2a2a;transform:scaleX(0.723);">00000008</span>
<span class="t" style="left:214.8px;top:296.8px;font-size:8.7px;color:#2a2a2a;transform:scaleX(0.740);">240-1104300-01 трубка</span>
<span class="t" style="left:324.8px;top:296.8px;font-size:8.7px;color:#2a2a2a;transform:scaleX(0.625);">4.000</span>
<span class="t" style="left:366.4px;top:296.8px;font-size:8.7px;color:#2a2a2a;transform:scaleX(0.652);">4.000</span>
<span class="t" style="left:398.8px;top:296.8px;font-size:8.7px;color:#2a2a2a;transform:scaleX(0.684);">шт</span>
<span class="t" style="left:440.3px;top:296.8px;font-size:8.7px;color:#2a2a2a;transform:scaleX(0.676);">251.00</span>
<span class="t" style="left:462.5px;top:296.8px;font-size:8.7px;color:#2a2a2a;transform:scaleX(0.796);">руб.</span>
<svg style="left:166.3px;top:307.9px" width="7.200" height="8" viewBox="0 0 7.200 8"><path d="M.5 1.600h2.600v1h3.500v4.600h-6.100z" fill="#48d6da" stroke="#2a5a7a" stroke-width=".6"/><path d="M.9 7.400h5.900v-4.200" stroke="#2a2a2a" stroke-width=".9" fill="none"/><rect x=".9" y=".5" width="1.800" height="1.300" fill="#dff4ff" stroke="#36a" stroke-width=".3"/><rect x="1.200" y="3.300" width="4.400" height=".9" fill="#a8f0f0"/></svg>
<span class="t" style="left:176.7px;top:308.1px;font-size:8.7px;color:#2a2a2a;transform:scaleX(0.723);">00000007</span>
<span class="t" style="left:214.8px;top:308.1px;font-size:8.7px;color:#2a2a2a;transform:scaleX(0.732);">240-1104300-01 трубка (Прс</span>
<span class="t" style="left:321.9px;top:308.1px;font-size:8.7px;color:#2a2a2a;transform:scaleX(0.620);">24.000</span>
<span class="t" style="left:363.5px;top:308.1px;font-size:8.7px;color:#2a2a2a;transform:scaleX(0.643);">24.000</span>
<span class="t" style="left:398.8px;top:308.1px;font-size:8.7px;color:#2a2a2a;transform:scaleX(0.684);">шт</span>
<span class="t" style="left:440.3px;top:308.1px;font-size:8.7px;color:#2a2a2a;transform:scaleX(0.676);">258.00</span>
<span class="t" style="left:462.5px;top:308.1px;font-size:8.7px;color:#2a2a2a;transform:scaleX(0.796);">руб.</span>
<svg style="left:508.3px;top:231.5px" width="5" height="3"><path d="M0 3h5l-2.500-3z" fill="#444"/></svg>
<svg style="left:508.3px;top:314px" width="5" height="3"><path d="M0 0h5l-2.500 3z" fill="#444"/></svg>
<div class="a" style="left:506.3px;top:241px;width:8px;height:11.5px;background:linear-gradient(90deg,#f6f6f6,#dcdcdc);border:1px solid #979797;border-radius:1.5px;"></div>
<div class="a" style="left:508.3px;top:244.25px;width:4px;height:1px;background:#8e8e8e;"></div>
<div class="a" style="left:508.3px;top:246.25px;width:4px;height:1px;background:#8e8e8e;"></div>
<div class="a" style="left:508.3px;top:248.25px;width:4px;height:1px;background:#8e8e8e;"></div>
<div class="a" style="left:52px;top:327.5px;width:7px;height:8px;background:#fff;border:1px solid #6a6a6a;border-right-color:#cfcfcf;border-bottom-color:#cfcfcf;"></div>
<svg style="left:53.200px;top:329px" width="5" height="5"><path d="M.3 2.200l1.500 1.700 2.800-3.600" fill="none" stroke="#000" stroke-width="1.100"/></svg>
<span class="t" style="left:62.0px;top:328.4px;font-size:8.7px;color:#222;transform:scaleX(0.792);">Остатки и цена в колонке</span>
<span class="t" style="left:163.6px;top:327.9px;font-size:8.53px;font-weight:bold;color:#0a0a86;transform:scaleX(0.698);">236-1104422 трубка топливная низкого давления</span>
<div class="a grid" style="left:51.5px;top:342px;width:327px;height:78.4px;"></div>
<div class="a" style="left:53.5px;top:344px;width:314.5px;height:11px;background:#f0f0f0;"></div>
<div class="a" style="left:368px;top:344px;width:9.5px;height:75.4px;background:#f0f0f0;border-left:1px solid #e2e2e2;"></div>
<div class="a" style="left:53.5px;top:356.2px;width:16.8px;height:10.7px;background:#3399ff;"></div>
<div class="a hl" style="left:53.5px;top:355px;width:314.5px;height:1px;"></div>
<div class="a hl" style="left:53.5px;top:366.5px;width:314.5px;height:1px;"></div>
<div class="a hl" style="left:53.5px;top:377.7px;width:314.5px;height:1px;"></div>
<div class="a hl" style="left:53.5px;top:389.3px;width:314.5px;height:1px;"></div>
<div class="a hl" style="left:53.5px;top:400.4px;width:314.5px;height:1px;"></div>
<div class="a hl" style="left:53.5px;top:411.9px;width:314.5px;height:1px;"></div>
<div class="a" style="left:53.5px;top:354px;width:314.5px;height:2px;background:#8e8e8e;"></div>
<div class="a vl" style="left:70.3px;top:344px;width:1px;height:75.4px;"></div>
<div class="a vl" style="left:88.8px;top:344px;width:1px;height:75.4px;"></div>
<div class="a vl" style="left:124.7px;top:344px;width:1px;height:75.4px;"></div>
<div class="a vl" style="left:212.3px;top:344px;width:1px;height:75.4px;"></div>
<div class="a vl" style="left:230.6px;top:344px;width:1px;height:75.4px;"></div>
<div class="a vl" style="left:274.8px;top:344px;width:1px;height:75.4px;"></div>
<div class="a vl" style="left:318.7px;top:344px;width:1px;height:75.4px;"></div>
<div class="a" style="left:53.5px;top:344px;width:314.5px;height:1px;background:#fff;"></div>
<div class="a" style="left:53.5px;top:344px;width:1px;height:10px;background:#fff;"></div>
<div class="a" style="left:71.3px;top:344px;width:1px;height:10px;background:#fff;"></div>
<div class="a" style="left:89.8px;top:344px;width:1px;height:10px;background:#fff;"></div>
<div class="a" style="left:125.7px;top:344px;width:1px;height:10px;background:#fff;"></div>
<div class="a" style="left:213.3px;top:344px;width:1px;height:10px;background:#fff;"></div>
<div class="a" style="left:231.6px;top:344px;width:1px;height:10px;background:#fff;"></div>
<div class="a" style="left:275.8px;top:344px;width:1px;height:10px;background:#fff;"></div>
<div class="a" style="left:319.7px;top:344px;width:1px;height:10px;background:#fff;"></div>
<span class="t" style="left:55.0px;top:345.1px;font-size:8.7px;font-weight:bold;color:#000;transform:scaleX(0.689);">+</span>
<span class="t" style="left:73.0px;top:345.1px;font-size:8.7px;font-weight:bold;color:#000;transform:scaleX(0.863);">-</span>
<span class="t" style="left:91.0px;top:345.1px;font-size:8.7px;font-weight:bold;color:#000;transform:scaleX(0.845);">Вид</span>
<span class="t" style="left:127.0px;top:345.1px;font-size:8.7px;font-weight:bold;color:#000;transform:scaleX(0.865);">Выбранный товар</span>
<span class="t" style="left:214.7px;top:345.1px;font-size:8.7px;font-weight:bold;color:#000;transform:scaleX(0.764);">Ед.</span>
<span class="t" style="left:232.7px;top:345.1px;font-size:8.7px;font-weight:bold;color:#000;transform:scaleX(0.858);">Количест...</span>
<span class="t" style="left:276.4px;top:345.1px;font-size:8.7px;font-weight:bold;color:#000;transform:scaleX(0.865);">Цена</span>
<span class="t" style="left:321.2px;top:345.1px;font-size:8.7px;font-weight:bold;color:#000;transform:scaleX(0.874);">Сумма</span>
<svg style="left:371px;top:349px" width="5" height="3"><path d="M0 3h5l-2.500-3z" fill="#444"/></svg>
<svg style="left:371px;top:411.5px" width="5" height="3"><path d="M0 0h5l-2.500 3z" fill="#444"/></svg>
<div class="a" style="left:369px;top:357px;width:8px;height:11.5px;background:linear-gradient(90deg,#f6f6f6,#dcdcdc);border:1px solid #979797;border-radius:1.5px;"></div>
<div class="a" style="left:371px;top:360.25px;width:4px;height:1px;background:#8e8e8e;"></div>
<div class="a" style="left:371px;top:362.25px;width:4px;height:1px;background:#8e8e8e;"></div>
<div class="a" style="left:371px;top:364.25px;width:4px;height:1px;background:#8e8e8e;"></div>
<div class="a btn" style="left:382.5px;top:342.5px;width:14px;height:14.5px;"></div>
<span class="t" style="left:387.3px;top:345.5px;font-size:8.7px;color:#222;transform:scaleX(0.775);">X</span>
<div class="a btn" style="left:398px;top:342.5px;width:50.5px;height:14.5px;"></div>
<span class="t" style="left:410.8px;top:345.5px;font-size:8.7px;color:#222;transform:scaleX(0.789);">Остатки</span>
<div class="a btn" style="left:382.5px;top:361px;width:14px;height:14.5px;"></div>
<span class="t" style="left:385.3px;top:364.0px;font-size:8.7px;color:#222;transform:scaleX(0.732);">XX</span>
<span class="t" style="left:383.7px;top:383.4px;font-size:8.7px;color:#222;transform:scaleX(0.783);">Валюта:</span>
<span class="t" style="left:415.8px;top:384.7px;font-size:7.39px;font-weight:bold;color:#0e0e7c;transform:scaleX(0.759);">руб.</span>
<div class="a" style="left:382.5px;top:401.5px;width:64.5px;height:17px;border:1px solid #c4c4c4;box-shadow:inset 1px 1px 0 #fdfdfd;"></div>
<div class="a" style="left:384.5px;top:396px;width:23.5px;height:9px;background:#f0f0f0;"></div>
<span class="t" style="left:385.5px;top:397.0px;font-size:8.7px;color:#222;transform:scaleX(0.786);">Сумма</span>
<div class="a btn" style="left:51.5px;top:423.6px;width:51.5px;height:16.6px;"></div>
<span class="t" style="left:73.5px;top:427.6px;font-size:8.7px;color:#222;transform:scaleX(0.676);">OK</span>
<div class="a btn" style="left:106px;top:423.6px;width:51px;height:16.6px;"></div>
<span class="t" style="left:118.0px;top:427.6px;font-size:8.7px;color:#222;transform:scaleX(0.806);"><u>З</u>акрыть</span>
<div class="a btn" style="left:159.7px;top:423.6px;width:52.7px;height:16.6px;"></div>
<span class="t" style="left:176.8px;top:427.6px;font-size:8.7px;color:#222;transform:scaleX(0.813);">Поиск</span>
<span class="t" style="left:245.5px;top:428.0px;font-size:8.7px;color:#222;transform:scaleX(0.725);">Вид ТМЦ:</span>
<div class="a" style="left:281px;top:424px;width:53.7px;height:14.6px;background:#f0f0f0;border:1px solid #868686;border-right-color:#e0e0e0;border-bottom-color:#e0e0e0;"></div>
<span class="t" style="left:283.2px;top:427.6px;font-size:8.7px;color:#222;transform:scaleX(0.845);">Товар</span>
<div class="a" style="left:327.5px;top:425px;width:6.7px;height:13px;background:#f0f0f0;border:1px solid #808080;border-top-color:#fdfdfd;border-left-color:#fdfdfd;"></div>
<div class="a" style="left:329px;top:436px;width:3px;height:1px;background:#333;"></div>
<span class="t" style="left:339.4px;top:428.0px;font-size:8.7px;color:#222;transform:scaleX(0.785);">Запрашивать:</span>
<div class="a" style="left:387.7px;top:423.3px;width:58.7px;height:14.5px;background:#fff;border:1px solid #8c8c8c;"></div>
<span class="t" style="left:389.7px;top:426.5px;font-size:8.7px;color:#222;transform:scaleX(0.700);">Кол.+ цену</span>
<div class="a" style="left:436px;top:424.5px;width:9.5px;height:12px;background:#f0f0f0;border:1px solid #9a9a9a;border-top-color:#fdfdfd;border-left-color:#fdfdfd;"></div>
<svg style="left:438px;top:429px" width="5" height="3"><path d="M0 0h5l-2.500 3z" fill="#111"/></svg>
<div class="a" style="left:384px;top:212px;width:64.5px;height:6.8px;background:#d8d8d8;border-bottom:1px solid #7a7a7a;border-right:1px solid #7a7a7a;"></div>
<div class="a" style="left:423px;top:212px;width:1px;height:3px;background:#333;"></div>
<div class="a" style="left:441px;top:212px;width:1px;height:3px;background:#333;"></div>
<div class="a" style="left:275.2px;top:8.6px;width:349.3px;height:205.2px;background:linear-gradient(#f4e4c0 0px,#efd09a 5px,#e9ba6a 10px,#e8b864 17px,#f1cf98 22px,#f1d6a6 45px,#e7b060 72px,#e4a852 190px,#eaae54 199px,#f4c670 202px,#e9a94a 205px);border:1px solid #4a3c28;border-radius:5px 5px 2px 2px;box-shadow:2px 4px 6px 1px rgba(0,0,0,.62);"></div>
<div class="a" style="left:279.2px;top:31.8px;width:341.3px;height:176px;background:#f0f0f0;border:1px solid #fff;border-top-color:#e8dcc4;"></div>
<div class="a" style="left:276.2px;top:9.6px;width:215px;height:21.5px;background:linear-gradient(90deg,rgba(247,234,204,.95) 0%,rgba(246,230,196,.9) 70%,rgba(244,222,180,0) 100%);border-radius:4px 0 0 0;"></div>
<span class="t" style="left:280.6px;top:17.3px;font-size:9.48px;color:#2e2a24;transform:scaleX(0.755);">Номенклатура (поиск элементов по подстроке)</span>
<div class="a" style="left:592.5px;top:9.6px;width:28.3px;height:15.2px;background:linear-gradient(#e9a690 0%,#dc7860 46%,#c93a1c 54%,#d45a3a 100%);border:1px solid #5a2a20;border-top:none;border-radius:0 0 3.500px 3.500px;box-shadow:inset 0 0 0 1px rgba(255,255,255,.3);"></div>
<svg style="left:603px;top:13px" width="8.400" height="8.800" viewBox="0 0 8.400 8.800"><path d="M1.200 1.200L7.200 7.600M7.200 1.200L1.200 7.600" stroke="#6a5a58" stroke-width="3" stroke-linecap="square"/><path d="M1.200 1.200L7.200 7.600M7.200 1.200L1.200 7.600" stroke="#fff" stroke-width="1.700" stroke-linecap="square"/></svg>
<span class="t" style="left:285.7px;top:43.6px;font-size:8.7px;color:#222;transform:scaleX(0.619);">Подстрока для поиска:</span>
<div class="a sunk" style="left:364.5px;top:40.3px;width:226.5px;height:14.2px;"></div>
<span class="t" style="left:366.0px;top:43.8px;font-size:8.7px;color:#222;transform:scaleX(0.790);">клапан вып</span>
<div class="a" style="left:591.3px;top:40.3px;width:7.2px;height:14.4px;background:#f0f0f0;border:1px solid #9a9a9a;border-top-color:#fdfdfd;border-left-color:#fdfdfd;"></div>
<div class="a" style="left:593px;top:51.5px;width:3.5px;height:1px;background:#333;"></div>
<div class="a btn" style="left:601px;top:40.3px;width:14.3px;height:15px;"></div>
<svg style="left:603.200px;top:42.400px" width="10" height="11.500" viewBox="0 0 10 11.500"><path d="M1.600 3.500l.6-3h1.800l.6 3v7.500h-4.200v-4.500zM5.400 3.500l.6-3h1.800l.6 3 1.200 3v4.500h-4.200z" fill="#151515"/><rect x="4.300" y="4" width="1.400" height="3" fill="#151515"/><rect x=".8" y="9.400" width="3.400" height="1.800" fill="#1a8a90"/><rect x="5.800" y="9.400" width="3.400" height="1.800" fill="#1a8a90"/><rect x="1.400" y="6.500" width=".9" height="2.500" fill="#567"/><rect x="6.400" y="6.500" width=".9" height="2.500" fill="#567"/></svg>
<span class="t" style="left:364.6px;top:61.6px;font-size:8.7px;color:#28289c;transform:scaleX(0.780);">Для поиска введите строку и нажмите Enter или кнопку с биноклем</span>
<div class="a grid" style="left:285px;top:76.5px;width:330.5px;height:100.5px;"></div>
<div class="a" style="left:287px;top:78.5px;width:317.5px;height:10px;background:#f0f0f0;"></div>
<div class="a" style="left:604.5px;top:78.5px;width:10px;height:97.5px;background:#f0f0f0;border-left:1px solid #e2e2e2;"></div>
<div class="a hl" style="left:287px;top:100.8px;width:317.5px;height:1px;"></div>
<div class="a hl" style="left:287px;top:112.2px;width:317.5px;height:1px;"></div>
<div class="a hl" style="left:287px;top:123.6px;width:317.5px;height:1px;"></div>
<div class="a hl" style="left:287px;top:135px;width:317.5px;height:1px;"></div>
<div class="a hl" style="left:287px;top:146.4px;width:317.5px;height:1px;"></div>
<div class="a hl" style="left:287px;top:157.8px;width:317.5px;height:1px;"></div>
<div class="a hl" style="left:287px;top:169.2px;width:317.5px;height:1px;"></div>
<div class="a" style="left:287px;top:87.5px;width:317.5px;height:2px;background:#8e8e8e;"></div>
<div class="a vl" style="left:324.2px;top:78.5px;width:1px;height:97.5px;"></div>
<div class="a vl" style="left:510.8px;top:78.5px;width:1px;height:97.5px;"></div>
<div class="a" style="left:286.8px;top:90px;width:36.8px;height:10.8px;background:#3399ff;border:1px solid #6e5a4a;"></div>
<div class="a" style="left:287px;top:78.5px;width:317.5px;height:1px;background:#fff;"></div>
<div class="a" style="left:287px;top:78.5px;width:1px;height:9px;background:#fff;"></div>
<div class="a" style="left:325.2px;top:78.5px;width:1px;height:9px;background:#fff;"></div>
<div class="a" style="left:511.8px;top:78.5px;width:1px;height:9px;background:#fff;"></div>
<span class="t" style="left:287.7px;top:79.3px;font-size:8.7px;font-weight:bold;color:#000;transform:scaleX(0.823);">Код</span>
<span class="t" style="left:326.3px;top:79.3px;font-size:8.7px;font-weight:bold;color:#000;transform:scaleX(0.816);">Найденные элементы</span>
<span class="t" style="left:512.2px;top:79.3px;font-size:8.7px;font-weight:bold;color:#000;transform:scaleX(0.840);">Артикул</span>
<span class="t" style="left:288.1px;top:91.5px;font-size:8.96px;color:#fff;transform:scaleX(0.660);">00000010</span>
<span class="t" style="left:326.3px;top:91.6px;font-size:8.7px;color:#2a2a2a;transform:scaleX(0.755);">240-1007015  клапан выпускной (мал.) (аналог)</span>
<svg style="left:607.3px;top:83px" width="5" height="3"><path d="M0 3h5l-2.500-3z" fill="#444"/></svg>
<svg style="left:607.3px;top:167.5px" width="5" height="3"><path d="M0 0h5l-2.500 3z" fill="#444"/></svg>
<div class="a" style="left:605px;top:92.2px;width:8.6px;height:11.5px;background:linear-gradient(90deg,#f6f6f6,#dcdcdc);border:1px solid #979797;border-radius:1.5px;"></div>
<div class="a" style="left:607px;top:95.45px;width:4.6px;height:1px;background:#8e8e8e;"></div>
<div class="a" style="left:607px;top:97.45px;width:4.6px;height:1px;background:#8e8e8e;"></div>
<div class="a" style="left:607px;top:99.45px;width:4.6px;height:1px;background:#8e8e8e;"></div>
<div class="a btn" style="left:284.7px;top:185.6px;width:52.6px;height:15.9px;"></div>
<span class="t" style="left:297.2px;top:189.3px;font-size:8.7px;color:#222;transform:scaleX(0.785);"><u>В</u>ыбрать</span>
<div class="a btn" style="left:338.9px;top:185.6px;width:64.7px;height:15.9px;"></div>
<span class="t" style="left:344.2px;top:189.3px;font-size:8.7px;color:#222;transform:scaleX(0.775);"><u>О</u>ткрыть элемент</span>
<div class="a btn" style="left:405.7px;top:185.6px;width:51.9px;height:15.9px;"></div>
<span class="t" style="left:418.0px;top:189.3px;font-size:8.7px;color:#222;transform:scaleX(0.806);"><u>З</u>акрыть</span>
<span class="t" style="left:462.4px;top:189.3px;font-size:8.7px;color:#222;transform:scaleX(0.771);">Искать по:</span>
<div class="a" style="left:499.6px;top:185px;width:115px;height:14.8px;background:#fff;border:1px solid #8c8c8c;"></div>
<span class="t" style="left:502.0px;top:188.5px;font-size:8.7px;color:#222;transform:scaleX(0.788);">Наименование</span>
<div class="a" style="left:604.7px;top:186px;width:9.3px;height:12.8px;background:#f0f0f0;border:1px solid #9a9a9a;border-top-color:#fdfdfd;border-left-color:#fdfdfd;"></div>
<svg style="left:606.800px;top:191px" width="5" height="3"><path d="M0 0h5l-2.500 3z" fill="#111"/></svg>
<svg style="left:0;top:0" width="631" height="458" viewBox="0 0 631 458"><g fill="none" stroke="#ed1c24" stroke-width="3.100" stroke-linecap="round" stroke-linejoin="round"><path d="M272 15.300 C285 13.300 330 12.500 358 11.800 C375 10.700 395 10.300 412 11.600 C432 13.200 448 16.500 448.300 21.800 C448.300 27 436 31.500 418 33 C400 33.800 340 33.600 312 33.600 C302 33 290 26 276 17.800 C274 16.600 272.500 16 271.600 15.600"/><path d="M193 418.800 C185 418.300 172 418.600 164 421.800 C159.500 424 157.800 427 158.200 431 C158.200 436 158.500 439 159.200 441.500 C160.500 445.500 164 447.500 168 448.300 C176 450 190 450 196 449.400 C201 448.600 203 445.500 207 443.500 C212 441 220.800 438 220.600 433 C220.400 428 216 425 212 423 C207 420.500 200 419 191 418.800"/></g></svg>
</div></div>
</body>
</html>
